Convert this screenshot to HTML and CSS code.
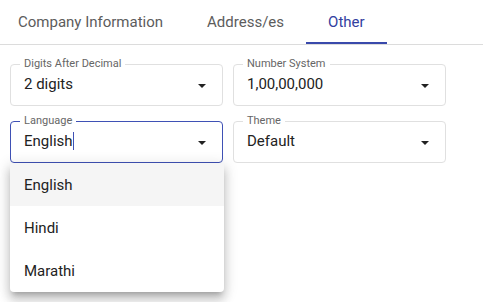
FILE: index.html
```html
<!DOCTYPE html>
<html lang="en">
<head>
<meta charset="utf-8">
<title>Settings</title>
<link rel="stylesheet" href="styles.css">
</head>
<body>
<nav class="tabs">
  <div class="tab">Company Information</div>
  <div class="tab">Address/es</div>
  <div class="tab active">Other</div>
</nav>
<div class="form">
  <div class="field">
    <span class="label">Digits After Decimal</span>
    <div class="value">2 digits</div>
    <span class="arrow"></span>
  </div>
  <div class="field">
    <span class="label">Number System</span>
    <div class="value">1,00,00,000</div>
    <span class="arrow"></span>
  </div>
  <div class="select">
    <div class="field focused">
      <span class="label">Language</span>
      <div class="value"><span class="caret">English</span></div>
      <span class="arrow"></span>
    </div>
    <div class="listbox">
      <div class="opt opt-active">English</div>
      <div class="opt">Hindi</div>
      <div class="opt">Marathi</div>
    </div>
  </div>
  <div class="field">
    <span class="label">Theme</span>
    <div class="value">Default</div>
    <span class="arrow"></span>
  </div>
</div>
</body>
</html>
```
FILE: styles.css
```css
* { box-sizing: border-box; }
html, body {
  min-height: 100vh;
}
body {
  margin: 0;
  font-family: Roboto, "Noto Sans", sans-serif;
  background: #fff;
  color: #222;
}
.tabs {
  display: flex;
  height: 45px;
  border-bottom: 1px solid #dcdcdc;
  margin-left: -4px;
}
.tab {
  padding: 0 22px;
  height: 44px;
  display: flex;
  align-items: center;
  font-size: 15px;
  color: #5c5c5c;
  border-bottom: 2px solid transparent;
  padding-top: 2px;
}
.tab.active {
  color: #3240a0;
  border-bottom-color: #3949ab;
}
.form {
  display: grid;
  grid-template-columns: 213px 213px;
  column-gap: 10px;
  row-gap: 15px;
  padding: 0 10px;
  margin: 19px 0 0;
}
.select {
  position: relative;
}
.field {
  position: relative;
  height: 42px;
  border: 1px solid #e0e0e0;
  border-radius: 4px;
  padding: 10px 0 0 13px;
}
.field.focused {
  border-color: #3f51b5;
}
.label {
  position: absolute;
  top: -8px;
  left: 9px;
  padding: 0 4px;
  background: #fff;
  font-size: 11px;
  line-height: 14px;
  color: #666;
}
.value {
  font-size: 15px;
  line-height: 18px;
  color: #222;
}
.caret {
  border-right: 1px solid #3f51b5;
}
.arrow {
  position: absolute;
  right: 16px;
  top: 19px;
  width: 0;
  height: 0;
  border-left: 4px solid transparent;
  border-right: 4px solid transparent;
  border-top: 4px solid #222;
}
.listbox {
  position: absolute;
  top: 42px;
  left: 0;
  width: 214px;
  background-color: #ffffff;
  border-radius: 0 0 4px 4px;
  box-shadow: 0 5px 5px -3px rgba(0,0,0,.2), 0 8px 10px 1px rgba(0,0,0,.14), 0 3px 14px 2px rgba(0,0,0,.12);
  z-index: 2;
}
.opt {
  height: 43px;
  display: flex;
  align-items: center;
  padding-left: 14px;
  font-size: 15px;
  color: #222;
}
.opt-active {
  background-color: #f5f5f5;
}
```
